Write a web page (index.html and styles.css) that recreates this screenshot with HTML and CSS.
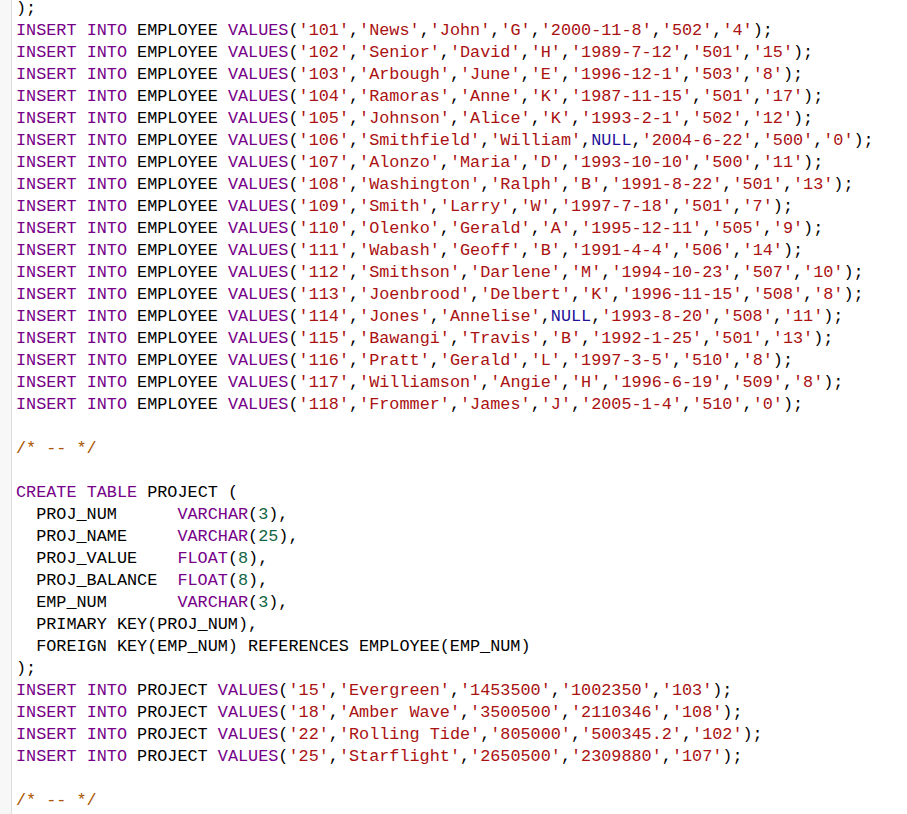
FILE: index.html
```html
<!DOCTYPE html>
<html>
<head>
<meta charset="utf-8">
<link rel="stylesheet" href="styles.css">
</head>
<body>
<div class="editor">
  <div class="gutter"></div>
  <pre class="code"><span class="line">);</span>
<span class="line"><span class="k">INSERT</span> <span class="k">INTO</span> EMPLOYEE <span class="k">VALUES</span>(<span class="s">'101'</span>,<span class="s">'News'</span>,<span class="s">'John'</span>,<span class="s">'G'</span>,<span class="s">'2000-11-8'</span>,<span class="s">'502'</span>,<span class="s">'4'</span>);</span>
<span class="line"><span class="k">INSERT</span> <span class="k">INTO</span> EMPLOYEE <span class="k">VALUES</span>(<span class="s">'102'</span>,<span class="s">'Senior'</span>,<span class="s">'David'</span>,<span class="s">'H'</span>,<span class="s">'1989-7-12'</span>,<span class="s">'501'</span>,<span class="s">'15'</span>);</span>
<span class="line"><span class="k">INSERT</span> <span class="k">INTO</span> EMPLOYEE <span class="k">VALUES</span>(<span class="s">'103'</span>,<span class="s">'Arbough'</span>,<span class="s">'June'</span>,<span class="s">'E'</span>,<span class="s">'1996-12-1'</span>,<span class="s">'503'</span>,<span class="s">'8'</span>);</span>
<span class="line"><span class="k">INSERT</span> <span class="k">INTO</span> EMPLOYEE <span class="k">VALUES</span>(<span class="s">'104'</span>,<span class="s">'Ramoras'</span>,<span class="s">'Anne'</span>,<span class="s">'K'</span>,<span class="s">'1987-11-15'</span>,<span class="s">'501'</span>,<span class="s">'17'</span>);</span>
<span class="line"><span class="k">INSERT</span> <span class="k">INTO</span> EMPLOYEE <span class="k">VALUES</span>(<span class="s">'105'</span>,<span class="s">'Johnson'</span>,<span class="s">'Alice'</span>,<span class="s">'K'</span>,<span class="s">'1993-2-1'</span>,<span class="s">'502'</span>,<span class="s">'12'</span>);</span>
<span class="line"><span class="k">INSERT</span> <span class="k">INTO</span> EMPLOYEE <span class="k">VALUES</span>(<span class="s">'106'</span>,<span class="s">'Smithfield'</span>,<span class="s">'William'</span>,<span class="a">NULL</span>,<span class="s">'2004-6-22'</span>,<span class="s">'500'</span>,<span class="s">'0'</span>);</span>
<span class="line"><span class="k">INSERT</span> <span class="k">INTO</span> EMPLOYEE <span class="k">VALUES</span>(<span class="s">'107'</span>,<span class="s">'Alonzo'</span>,<span class="s">'Maria'</span>,<span class="s">'D'</span>,<span class="s">'1993-10-10'</span>,<span class="s">'500'</span>,<span class="s">'11'</span>);</span>
<span class="line"><span class="k">INSERT</span> <span class="k">INTO</span> EMPLOYEE <span class="k">VALUES</span>(<span class="s">'108'</span>,<span class="s">'Washington'</span>,<span class="s">'Ralph'</span>,<span class="s">'B'</span>,<span class="s">'1991-8-22'</span>,<span class="s">'501'</span>,<span class="s">'13'</span>);</span>
<span class="line"><span class="k">INSERT</span> <span class="k">INTO</span> EMPLOYEE <span class="k">VALUES</span>(<span class="s">'109'</span>,<span class="s">'Smith'</span>,<span class="s">'Larry'</span>,<span class="s">'W'</span>,<span class="s">'1997-7-18'</span>,<span class="s">'501'</span>,<span class="s">'7'</span>);</span>
<span class="line"><span class="k">INSERT</span> <span class="k">INTO</span> EMPLOYEE <span class="k">VALUES</span>(<span class="s">'110'</span>,<span class="s">'Olenko'</span>,<span class="s">'Gerald'</span>,<span class="s">'A'</span>,<span class="s">'1995-12-11'</span>,<span class="s">'505'</span>,<span class="s">'9'</span>);</span>
<span class="line"><span class="k">INSERT</span> <span class="k">INTO</span> EMPLOYEE <span class="k">VALUES</span>(<span class="s">'111'</span>,<span class="s">'Wabash'</span>,<span class="s">'Geoff'</span>,<span class="s">'B'</span>,<span class="s">'1991-4-4'</span>,<span class="s">'506'</span>,<span class="s">'14'</span>);</span>
<span class="line"><span class="k">INSERT</span> <span class="k">INTO</span> EMPLOYEE <span class="k">VALUES</span>(<span class="s">'112'</span>,<span class="s">'Smithson'</span>,<span class="s">'Darlene'</span>,<span class="s">'M'</span>,<span class="s">'1994-10-23'</span>,<span class="s">'507'</span>,<span class="s">'10'</span>);</span>
<span class="line"><span class="k">INSERT</span> <span class="k">INTO</span> EMPLOYEE <span class="k">VALUES</span>(<span class="s">'113'</span>,<span class="s">'Joenbrood'</span>,<span class="s">'Delbert'</span>,<span class="s">'K'</span>,<span class="s">'1996-11-15'</span>,<span class="s">'508'</span>,<span class="s">'8'</span>);</span>
<span class="line"><span class="k">INSERT</span> <span class="k">INTO</span> EMPLOYEE <span class="k">VALUES</span>(<span class="s">'114'</span>,<span class="s">'Jones'</span>,<span class="s">'Annelise'</span>,<span class="a">NULL</span>,<span class="s">'1993-8-20'</span>,<span class="s">'508'</span>,<span class="s">'11'</span>);</span>
<span class="line"><span class="k">INSERT</span> <span class="k">INTO</span> EMPLOYEE <span class="k">VALUES</span>(<span class="s">'115'</span>,<span class="s">'Bawangi'</span>,<span class="s">'Travis'</span>,<span class="s">'B'</span>,<span class="s">'1992-1-25'</span>,<span class="s">'501'</span>,<span class="s">'13'</span>);</span>
<span class="line"><span class="k">INSERT</span> <span class="k">INTO</span> EMPLOYEE <span class="k">VALUES</span>(<span class="s">'116'</span>,<span class="s">'Pratt'</span>,<span class="s">'Gerald'</span>,<span class="s">'L'</span>,<span class="s">'1997-3-5'</span>,<span class="s">'510'</span>,<span class="s">'8'</span>);</span>
<span class="line"><span class="k">INSERT</span> <span class="k">INTO</span> EMPLOYEE <span class="k">VALUES</span>(<span class="s">'117'</span>,<span class="s">'Williamson'</span>,<span class="s">'Angie'</span>,<span class="s">'H'</span>,<span class="s">'1996-6-19'</span>,<span class="s">'509'</span>,<span class="s">'8'</span>);</span>
<span class="line"><span class="k">INSERT</span> <span class="k">INTO</span> EMPLOYEE <span class="k">VALUES</span>(<span class="s">'118'</span>,<span class="s">'Frommer'</span>,<span class="s">'James'</span>,<span class="s">'J'</span>,<span class="s">'2005-1-4'</span>,<span class="s">'510'</span>,<span class="s">'0'</span>);</span>
<span class="line"> </span>
<span class="line"><span class="c">/* -- */</span></span>
<span class="line"> </span>
<span class="line"><span class="k">CREATE</span> <span class="k">TABLE</span> PROJECT (</span>
<span class="line">  PROJ_NUM      <span class="k">VARCHAR</span>(<span class="n">3</span>),</span>
<span class="line">  PROJ_NAME     <span class="k">VARCHAR</span>(<span class="n">25</span>),</span>
<span class="line">  PROJ_VALUE    <span class="k">FLOAT</span>(<span class="n">8</span>),</span>
<span class="line">  PROJ_BALANCE  <span class="k">FLOAT</span>(<span class="n">8</span>),</span>
<span class="line">  EMP_NUM       <span class="k">VARCHAR</span>(<span class="n">3</span>),</span>
<span class="line">  PRIMARY KEY(PROJ_NUM),</span>
<span class="line">  FOREIGN KEY(EMP_NUM) REFERENCES EMPLOYEE(EMP_NUM)</span>
<span class="line">);</span>
<span class="line"><span class="k">INSERT</span> <span class="k">INTO</span> PROJECT <span class="k">VALUES</span>(<span class="s">'15'</span>,<span class="s">'Evergreen'</span>,<span class="s">'1453500'</span>,<span class="s">'1002350'</span>,<span class="s">'103'</span>);</span>
<span class="line"><span class="k">INSERT</span> <span class="k">INTO</span> PROJECT <span class="k">VALUES</span>(<span class="s">'18'</span>,<span class="s">'Amber Wave'</span>,<span class="s">'3500500'</span>,<span class="s">'2110346'</span>,<span class="s">'108'</span>);</span>
<span class="line"><span class="k">INSERT</span> <span class="k">INTO</span> PROJECT <span class="k">VALUES</span>(<span class="s">'22'</span>,<span class="s">'Rolling Tide'</span>,<span class="s">'805000'</span>,<span class="s">'500345.2'</span>,<span class="s">'102'</span>);</span>
<span class="line"><span class="k">INSERT</span> <span class="k">INTO</span> PROJECT <span class="k">VALUES</span>(<span class="s">'25'</span>,<span class="s">'Starflight'</span>,<span class="s">'2650500'</span>,<span class="s">'2309880'</span>,<span class="s">'107'</span>);</span>
<span class="line"> </span>
<span class="line"><span class="c">/* -- */</span></span>
<span class="line"> </span></pre>
</div>
</body>
</html>
```

FILE: styles.css
```css
html, body {
  margin: 0;
  padding: 0;
  background: #ffffff;
}

body {
  height: 814px;
  overflow: hidden;
}

.editor {
  display: flex;
  height: 814px;
  overflow: hidden;
  background: #ffffff;
}

.gutter {
  flex: 0 0 11px;
  background: #f7f7f7;
  border-right: 1px solid #dddddd;
}

.code {
  margin: -2px 0 0 0;
  padding: 0 0 0 4px;
  font-family: "Liberation Mono", "DejaVu Sans Mono", monospace;
  font-size: 16.82px;
  line-height: 22px;
  color: #000000;
  white-space: pre;
}

.line {
  display: inline;
}

.k { color: #770088; }
.s { color: #aa1111; }
.a { color: #221199; }
.n { color: #116644; }
.c { color: #aa5500; }
```
